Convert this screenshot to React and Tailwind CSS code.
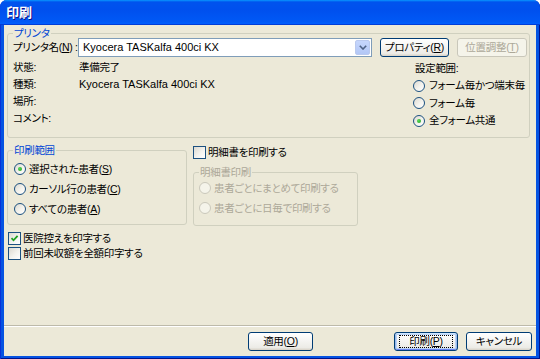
import React from "react";

function Radio({ checked, disabled }) {
  return (
    <span
      className={
        disabled
          ? "relative inline-block shrink-0 w-[12px] h-[12px] rounded-full border border-[#CAC8BB] bg-[#F5F4EA]"
          : "relative inline-block shrink-0 w-[12px] h-[12px] rounded-full border border-[#1C5180] bg-[linear-gradient(135deg,#dcd9d0,#f4f3ee_55%,#ffffff)]"
      }
    >
      {checked && (
        <span className="absolute left-[3px] top-[3px] w-[4px] h-[4px] rounded-full bg-[radial-gradient(circle_at_35%_35%,#55d855,#21a121)]" />
      )}
    </span>
  );
}

function Check({ checked }) {
  return (
    <span className="relative inline-flex shrink-0 items-center justify-center w-[13px] h-[13px] border border-[#1C5180] bg-[linear-gradient(135deg,#dcd9d0,#f4f3ee_55%,#ffffff)]">
      {checked && (
        <svg width="9" height="9" viewBox="0 0 9 9">
          <path d="M1.5 4.2 L3.5 6.3 L7.6 1.8" fill="none" stroke="#21A121" strokeWidth="1.8" />
        </svg>
      )}
    </span>
  );
}

function Btn({ className, children, primary, disabled }) {
  let base =
    "h-[19px] shrink-0 rounded-[3px] border flex items-center justify-center leading-[13px] ";
  if (disabled) {
    base += "border-[#C9C7BA] bg-[#F5F4EA] text-[#ACA899] ";
  } else if (primary) {
    base +=
      "border-[#003C74] bg-[linear-gradient(180deg,#ffffff,#ecebe6_86%,#d6d0c5)] shadow-[inset_0_1px_#cee7ff,inset_1px_0_#98b8ea,inset_-1px_0_#98b8ea,inset_0_-1px_#6982ee,inset_0_0_0_2px_#bcd4f6] ";
  } else {
    base +=
      "border-[#003C74] bg-[linear-gradient(180deg,#ffffff,#ecebe6_86%,#d6d0c5)] ";
  }
  return (
    <div className={base + className}>
      {primary ? (
        <span className="flex items-center justify-center w-[calc(100%-8px)] h-[13px] border border-dotted border-black">
          {children}
        </span>
      ) : (
        children
      )}
    </div>
  );
}

export default function App() {
  return (
    <div className="w-[540px] h-[359px] flex flex-col rounded-t-[7px] overflow-hidden whitespace-nowrap bg-[#0553E2] shadow-[inset_1px_0_#0831d9,inset_-1px_-1px_#00138c] font-['Liberation_Sans','Noto_Sans_CJK_JP',sans-serif] text-[10.5px] tracking-[-0.3px] text-black [font-feature-settings:'palt']">
      {/* title bar */}
      <div className="h-[25px] shrink-0 flex items-center pl-[6px] bg-[linear-gradient(180deg,#0997ff,#0053ee_8%,#0050ee_40%,#0059f6_88%,#0060fc_93%,#005bff_95%,#003dd7_96%,#003dd7)] text-white font-bold text-[13px] tracking-normal leading-[16px] [text-shadow:1px_1px_#0f1089]">
        印刷
      </div>

      {/* client */}
      <div className="flex-1 ml-[4px] mr-[4px] mb-[3px] bg-[#ECE9D8] flex flex-col min-h-0">
        {/* Printer group */}
        <div className="relative mt-[8px] ml-[3px] w-[523px] h-[105px] border border-[#D0D0BF] rounded-[3px] shrink-0">
          <span className="absolute left-[5px] top-[-7px] px-[1px] bg-[#ECE9D8] text-[#0046D5] leading-[13px]">
            プリンタ
          </span>
          <div className="pl-[5px] pt-[4px] flex flex-col">
            <div className="flex items-center h-[19px]">
              <span className="w-[65px] shrink-0 leading-[13px]">
                プリンタ名(<u>N</u>) :
              </span>
              <div className="w-[294px] shrink-0 h-[19px] border border-[#7F9DB9] bg-white flex items-center">
                <span className="flex-1 pl-[4px] leading-[13px] text-[11px] tracking-normal">Kyocera TASKalfa 400ci KX</span>
                <span className="w-[15px] h-[15px] mr-[1px] rounded-[2px] bg-[linear-gradient(180deg,#c6d6fc,#b2c7f6)] border border-[#BAC9EE] flex items-center justify-center">
                  <svg width="8" height="5" viewBox="0 0 8 5">
                    <path d="M0.8 0.8 L4 4 L7.2 0.8" fill="none" stroke="#4D6185" strokeWidth="1.6" />
                  </svg>
                </span>
              </div>
              <Btn className="ml-[8px] w-[69px]">
                <span>
                  プロパティ(<u>R</u>)
                </span>
              </Btn>
              <Btn className="ml-[8px] w-[70px]" disabled>
                <span>
                  位置調整(<u>T</u>)
                </span>
              </Btn>
            </div>

            <div className="flex mt-[2px]">
              <div className="w-[400px] shrink-0 flex flex-col">
                <div className="h-[17px] flex items-center">
                  <span className="w-[66px] leading-[13px]">状態:</span>
                  <span className="leading-[13px]">準備完了</span>
                </div>
                <div className="h-[17px] flex items-center">
                  <span className="w-[66px] leading-[13px]">種類:</span>
                  <span className="leading-[13px] text-[11px] tracking-normal">Kyocera TASKalfa 400ci KX</span>
                </div>
                <div className="h-[17px] flex items-center">
                  <span className="w-[66px] leading-[13px]">場所:</span>
                </div>
                <div className="h-[17px] flex items-center">
                  <span className="w-[66px] leading-[13px]">コメント:</span>
                </div>
              </div>
              <div className="flex flex-col pt-[1px]">
                <div className="h-[17px] flex items-center pl-[2px] leading-[13px]">設定範囲:</div>
                <div className="h-[17.5px] flex items-center gap-[4px]">
                  <Radio />
                  <span className="leading-[13px]">フォーム毎かつ端末毎</span>
                </div>
                <div className="h-[17.5px] flex items-center gap-[4px]">
                  <Radio />
                  <span className="leading-[13px]">フォーム毎</span>
                </div>
                <div className="h-[17.5px] flex items-center gap-[4px]">
                  <Radio checked />
                  <span className="leading-[13px]">全フォーム共通</span>
                </div>
              </div>
            </div>
          </div>
        </div>

        {/* middle */}
        <div className="flex shrink-0">
          <div className="ml-[3px] w-[180px] shrink-0 flex flex-col">
            <div className="relative mt-[12px] h-[75px] border border-[#D0D0BF] rounded-[3px]">
              <span className="absolute left-[5px] top-[-7px] px-[1px] bg-[#ECE9D8] text-[#0046D5] leading-[13px]">
                印刷範囲
              </span>
              <div className="pt-[8px] pl-[6px] flex flex-col">
                <div className="h-[20px] flex items-center gap-[3px]">
                  <Radio checked />
                  <span className="leading-[13px]">
                    選択された患者(<u>S</u>)
                  </span>
                </div>
                <div className="h-[20px] flex items-center gap-[3px]">
                  <Radio />
                  <span className="leading-[13px]">
                    カーソル行の患者(<u>C</u>)
                  </span>
                </div>
                <div className="h-[20px] flex items-center gap-[3px]">
                  <Radio />
                  <span className="leading-[13px]">
                    すべての患者(<u>A</u>)
                  </span>
                </div>
              </div>
            </div>
            <div className="mt-[6px] ml-[1px] flex flex-col">
              <div className="h-[15px] flex items-center gap-[2px]">
                <Check checked />
                <span className="leading-[13px]">医院控えを印字する</span>
              </div>
              <div className="h-[15px] flex items-center gap-[2px]">
                <Check />
                <span className="leading-[13px]">前回未収額を全額印字する</span>
              </div>
            </div>
          </div>

          <div className="ml-[6px] flex flex-col">
            <div className="mt-[8px] h-[13px] flex items-center gap-[2px]">
              <Check />
              <span className="leading-[13px]">明細書を印刷する</span>
            </div>
            <div className="relative mt-[13px] w-[165px] h-[54px] border border-[#D0D0BF] rounded-[3px]">
              <span className="absolute left-[5px] top-[-7px] px-[1px] bg-[#ECE9D8] text-[#ACA899] leading-[13px]">
                明細書印刷
              </span>
              <div className="pt-[5px] pl-[5px] flex flex-col text-[#ACA899]">
                <div className="h-[20px] flex items-center gap-[3px]">
                  <Radio disabled />
                  <span className="leading-[13px]">患者ごとにまとめて印刷する</span>
                </div>
                <div className="h-[20px] flex items-center gap-[3px]">
                  <Radio disabled />
                  <span className="leading-[13px]">患者ごとに日毎で印刷する</span>
                </div>
              </div>
            </div>
          </div>
        </div>

        <div className="flex-1" />

        {/* footer */}
        <div className="h-[31px] shrink-0 border-t border-[#BDBAAA] shadow-[inset_0_1px_#ffffff] flex justify-end items-start pt-[6px] pr-[4px]">
          <Btn className="w-[65px] mr-[81px]">
            <span>
              適用(<u>O</u>)
            </span>
          </Btn>
          <Btn className="w-[64px] mr-[8px]" primary>
            <span>
              印刷(<u>P</u>)
            </span>
          </Btn>
          <Btn className="w-[66px]">
            <span>キャンセル</span>
          </Btn>
        </div>
      </div>
    </div>
  );
}
